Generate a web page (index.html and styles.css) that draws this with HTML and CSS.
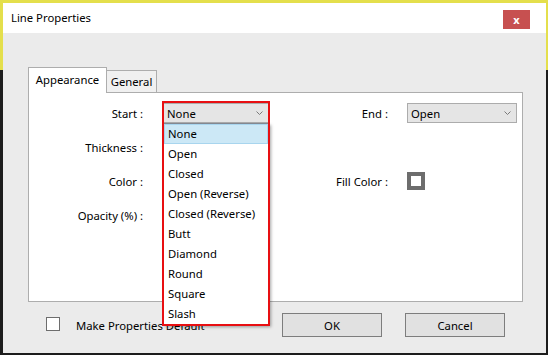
FILE: index.html
```html
<!DOCTYPE html>
<html lang="en">
<head>
  <meta charset="UTF-8" />
  <title>Line Properties</title>
  <link rel="stylesheet" href="styles.css">
</head>
<body>
<div class="window">
  <div class="titlebar">
    <span class="title">Line Properties</span>
    <div class="close">x</div>
  </div>
  <div class="content">
    <div class="tabs">
      <div class="tab active">Appearance</div>
      <div class="tab">General</div>
    </div>
    <div class="panel">
      <div class="label">Start :</div>
      <div class="start">
        <div class="combo">None
          <svg class="chev" width="7" height="4" viewBox="0 0 7 4"><polyline points="0.5,0.5 3.5,3.5 6.5,0.5" fill="none" stroke="#7a7a7a" stroke-width="1"/></svg>
        </div>
        <div class="popup">
          <div class="item selected">None</div>
          <div class="item">Open</div>
          <div class="item">Closed</div>
          <div class="item">Open (Reverse)</div>
          <div class="item">Closed (Reverse)</div>
          <div class="item">Butt</div>
          <div class="item">Diamond</div>
          <div class="item">Round</div>
          <div class="item">Square</div>
          <div class="item">Slash</div>
        </div>
      </div>
      <div class="label right">End :</div>
      <div class="combo end">Open
        <svg class="chev" width="7" height="4" viewBox="0 0 7 4"><polyline points="0.5,0.5 3.5,3.5 6.5,0.5" fill="none" stroke="#7a7a7a" stroke-width="1"/></svg>
      </div>
      <div class="label">Thickness :</div>
      <div class="label">Color :</div>
      <div class="label right">Fill Color :</div>
      <div class="swatch-cell"><span class="swatch"></span></div>
      <div class="label">Opacity (%) :</div>
    </div>
    <div class="footer">
      <span class="checkbox"></span>
      <span class="check-label">Make Properties Default</span>
      <div class="buttons">
        <button>OK</button>
        <button>Cancel</button>
      </div>
    </div>
  </div>
</div>
</body>
</html>
```

FILE: styles.css
```css
body {
  margin: 0;
  width: 548px;
  height: 355px;
  overflow: hidden;
  background: linear-gradient(#e4df4c 0, #e4df4c 70px, #1c1c1c 70px);
  font-family: 'Noto Sans', 'Open Sans', sans-serif;
  font-size: 11.3px;
  color: #000;
}
.window {
  margin: 3px 2px 2px 3px;
  width: 543px;
  height: 350px;
  display: flex;
  flex-direction: column;
}
.titlebar {
  height: 30px;
  background: #fff;
  display: flex;
  align-items: flex-start;
  justify-content: space-between;
}
.title {
  margin: 7px 0 0 8px;
  font-size: 11.3px;
}
.close {
  margin: 7px 16px 0 0;
  width: 27px;
  height: 19px;
  background: #c75050;
  color: #fff;
  font-weight: bold;
  font-size: 11px;
  display: flex;
  align-items: center;
  justify-content: center;
}
.content {
  flex-grow: 1;
  background: #ebebeb;
  padding: 34px 23px 0 25px;
}
.tabs {
  display: flex;
  align-items: flex-end;
  height: 25px;
}
.tab {
  height: 22px;
  box-sizing: border-box;
  border: 1px solid #adadad;
  border-bottom: none;
  background: #f0f0f0;
  padding: 0 4px;
  width: 51px;
  justify-content: center;
  display: flex;
  align-items: center;
  margin-left: -1px;
}
.tab.active {
  height: 26px;
  margin-left: 0;
  margin-bottom: -1px;
  background: #fff;
  width: 79px;
  padding-bottom: 2px;
  position: relative;
  z-index: 1;
}
.panel {
  height: 210px;
  box-sizing: border-box;
  background: #fff;
  border: 1px solid #adadad;
  padding: 3px 5px 0 0;
  display: grid;
  grid-template-columns: 134px 106px 1fr 110px;
  grid-auto-rows: 34px;
  align-items: center;
}
.label {
  grid-column: 1;
  text-align: right;
  padding-right: 20px;
}
.label.right {
  grid-column: 3;
  padding-right: 19px;
}
.start {
  grid-column: 2;
  position: relative;
}
.start::after {
  content: '';
  position: absolute;
  top: -2px;
  left: -1px;
  right: -1px;
  height: 225px;
  box-sizing: border-box;
  border: 2px solid #e80f12;
  z-index: 3;
  pointer-events: none;
}
.combo {
  height: 20px;
  box-sizing: border-box;
  background: #e5e5e5;
  border: 1px solid #acacac;
  padding-left: 3px;
  display: flex;
  align-items: center;
  justify-content: space-between;
}
.combo.end {
  grid-column: 4;
}
.chev {
  margin-right: 5px;
}
.popup {
  position: absolute;
  top: 20px;
  left: 0;
  right: 0;
  background: #fff;
  border: 1px solid #828790;
  box-shadow: 2px 2px 3px rgba(0, 0, 0, 0.35);
  z-index: 2;
}
.item {
  height: 20px;
  line-height: 20px;
  padding-left: 4px;
}
.item.selected {
  background: #cce8f6;
  box-shadow: inset 0 0 0 1px #a8d5ee;
}
.swatch-cell {
  grid-column: 4;
  display: flex;
}
.swatch {
  width: 18px;
  height: 18px;
  box-sizing: border-box;
  border: 4px solid #6d6d6d;
  background: #fff;
}
.footer {
  display: flex;
  align-items: center;
  height: 24px;
  margin-top: 11px;
}
.checkbox {
  width: 14px;
  height: 14px;
  box-sizing: border-box;
  border: 1px solid #6d6d6d;
  background: #fff;
  margin: -3px 0 0 18px;
}
.check-label {
  margin-left: 16px;
}
.buttons {
  margin-left: auto;
  margin-right: 18px;
  display: flex;
  gap: 23px;
}
button {
  width: 100px;
  height: 24px;
  background: #e1e1e1;
  border: 1px solid #7d7d7d;
  font-family: 'Noto Sans', 'Open Sans', sans-serif;
  font-size: 11.3px;
  color: #000;
  padding: 0;
}
```
